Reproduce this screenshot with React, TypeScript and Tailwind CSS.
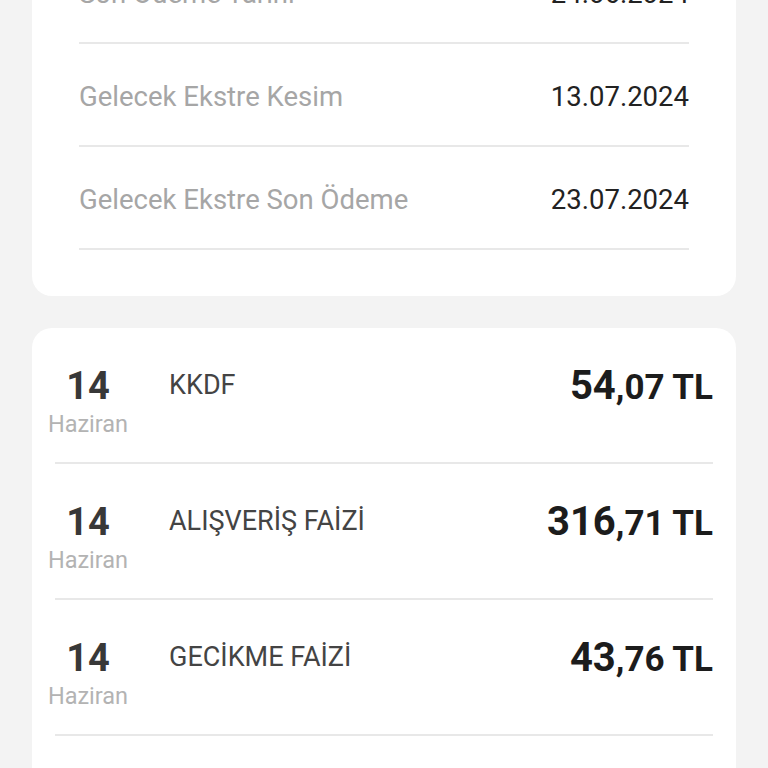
import React from "react";

const infoRows = [
  { label: "Son Ödeme Tarihi", value: "24.06.2024" },
  { label: "Gelecek Ekstre Kesim", value: "13.07.2024" },
  { label: "Gelecek Ekstre Son Ödeme", value: "23.07.2024" },
];

const txs = [
  { day: "14", month: "Haziran", title: "KKDF", whole: "54", dec: ",07 TL" },
  { day: "14", month: "Haziran", title: "ALIŞVERİŞ FAİZİ", whole: "316", dec: ",71 TL" },
  { day: "14", month: "Haziran", title: "GECİKME FAİZİ", whole: "43", dec: ",76 TL" },
  { day: "14", month: "Haziran", title: "AKDİ FAİZ", whole: "12", dec: ",40 TL" },
];

export default function App() {
  return (
    <div
      className="min-h-screen w-full bg-[#f3f3f3] px-8 overflow-hidden"
      style={{ fontFamily: "Roboto, 'Noto Sans', sans-serif" }}
    >
      <div className="mt-[-59px] rounded-[20px] bg-white px-[47px] pb-[46px]">
        {infoRows.map((r) => (
          <div key={r.label} className="border-b-2 border-[#e8e8e8] pt-[37px] pb-[32px]">
            <div className="flex items-center justify-between text-[27.5px] leading-[32px]">
              <span className="text-[#a6a6a6]">{r.label}</span>
              <span className="text-[#222222]">{r.value}</span>
            </div>
          </div>
        ))}
      </div>

      <div className="mt-8 rounded-[20px] bg-white px-[23px]">
        {txs.map((t, i) => (
          <div key={i} className="border-b-2 border-[#e8e8e8] pt-[36px] pb-[22px]">
            <div className="flex items-start">
              <div className="flex w-[66px] shrink-0 flex-col items-center">
                <span className="text-[38px] leading-[44px] font-bold text-[#383838]">{t.day}</span>
                <span className="whitespace-nowrap text-[23.5px] leading-[32px] text-[#b3b3b3]">{t.month}</span>
              </div>
              <div className="ml-[48px] flex-1 text-[27px] leading-[42px] text-[#444444]">{t.title}</div>
              <div className="flex items-baseline leading-[44px] font-bold text-[#1c1c1c]">
                <span className="text-[40px]">{t.whole}</span>
                <span className="text-[35px]">{t.dec}</span>
              </div>
            </div>
          </div>
        ))}
      </div>
    </div>
  );
}
